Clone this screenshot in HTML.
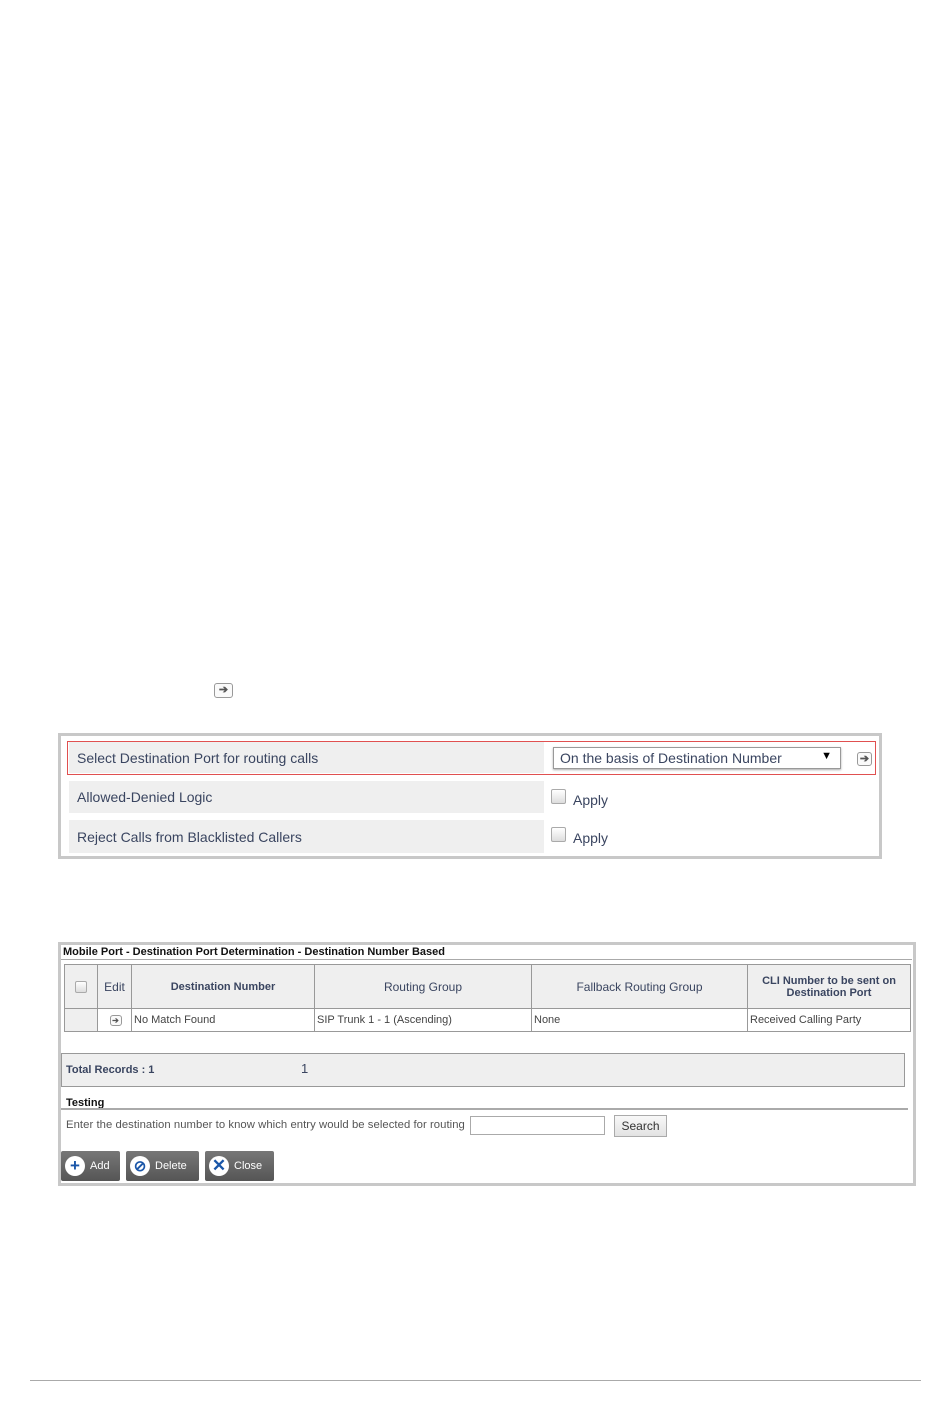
<!DOCTYPE html>
<html><head><meta charset="utf-8"><style>
*{margin:0;padding:0;box-sizing:border-box}
body{width:950px;height:1409px;background:#fff;position:relative;font-family:"Liberation Sans",Arial,sans-serif;overflow:hidden}
.a{position:absolute}
.lbl{background:#efefef;color:#3a4560;font-size:14px;padding-left:8px;display:flex;align-items:center}
.cb{width:15px;height:15px;border:1px solid #aaa;border-radius:2px;background:linear-gradient(#fff,#ddd)}
.ap{font-size:14px;color:#3a4560}
.ic{width:16px;height:14px;border:1px solid #999;border-radius:3px;font-size:11px;font-weight:bold;color:#555;text-align:center;line-height:12px;background:#fafafa}
table{border-collapse:collapse;font-size:11px}
td,th{border:1px solid #999}
th{background:#efefef;color:#3a4560;font-weight:bold;font-size:11px}
td{color:#444;padding-left:2px}
.btn{background:linear-gradient(#777,#555);color:#fff;font-size:11px;display:flex;align-items:center;border-radius:2px}
.circ{width:20px;height:20px;border-radius:50%;background:#fff;margin:0 5px 0 4px;display:flex;align-items:center;justify-content:center;color:#1a56a8;font-weight:bold;font-size:17px}
</style></head><body>
<div class="a ic" style="left:214px;top:683px;width:19px;height:15px">➔</div>

<div class="a" style="left:58px;top:733px;width:824px;height:126px;border:3px solid #c8c8c8"></div>
<div class="a" style="left:67px;top:741px;width:809px;height:34px;border:1px solid #e05050"></div>
<div class="a lbl" style="left:69px;top:742px;width:475px;height:31px">Select Destination Port for routing calls</div>
<div class="a" style="left:553px;top:747px;width:288px;height:22px;border:1px solid #999;box-shadow:0 1px 2px #aaa;font-size:14px;color:#3a4560;padding:2px 6px">On the basis of Destination Number<span style="position:absolute;right:8px;top:2px;font-size:11px;color:#000">▼</span></div>
<div class="a ic" style="left:857px;top:752px;width:15px;height:14px">➔</div>
<div class="a lbl" style="left:69px;top:781px;width:475px;height:32px">Allowed-Denied Logic</div>
<div class="a cb" style="left:551px;top:789px"></div><div class="a ap" style="left:573px;top:792px">Apply</div>
<div class="a lbl" style="left:69px;top:820px;width:475px;height:33px">Reject Calls from Blacklisted Callers</div>
<div class="a cb" style="left:551px;top:827px"></div><div class="a ap" style="left:573px;top:830px">Apply</div>

<div class="a" style="left:58px;top:942px;width:858px;height:244px;border:3px solid #c8c8c8"></div>
<div class="a" style="left:63px;top:946px;font-size:11px;font-weight:bold;color:#111">Mobile Port - Destination Port Determination - Destination Number Based</div>
<div class="a" style="left:61px;top:959px;width:851px;border-top:1px solid #aaa"></div>
<table class="a" style="left:64px;top:964px;width:847px">
<tr style="height:44px"><th style="width:33px"><div class="cb" style="margin:auto;width:12px;height:12px"></div></th><th style="width:34px;font-weight:normal;font-size:12px">Edit</th><th style="width:183px">Destination Number</th><th style="width:217px;font-weight:normal;font-size:12px">Routing Group</th><th style="width:216px;font-weight:normal;font-size:12px">Fallback Routing Group</th><th>CLI Number to be sent on<br>Destination Port</th></tr>
<tr style="height:23px"><td style="background:#efefef"></td><td><div class="ic" style="margin:auto;width:12px;height:11px;font-size:8px;line-height:9px">➔</div></td><td>No Match Found</td><td>SIP Trunk 1 - 1 (Ascending)</td><td>None</td><td>Received Calling Party</td></tr>
</table>
<div class="a" style="left:61px;top:1053px;width:844px;height:34px;background:#efefef;border:1px solid #999"></div>
<div class="a" style="left:66px;top:1064px;font-size:11px;font-weight:bold;color:#3a4560">Total Records : 1</div>
<div class="a" style="left:301px;top:1061px;font-size:13px;color:#3a4560">1</div>
<div class="a" style="left:66px;top:1097px;font-size:11px;font-weight:bold;color:#111">Testing</div>
<div class="a" style="left:61px;top:1108px;width:847px;border-top:2px solid #aaa"></div>
<div class="a" style="left:66px;top:1119px;font-size:11.3px;color:#555;letter-spacing:0.05px">Enter the destination number to know which entry would be selected for routing</div>
<div class="a" style="left:470px;top:1116px;width:135px;height:19px;border:1px solid #aaa"></div>
<div class="a" style="left:614px;top:1115px;width:53px;height:22px;border:1px solid #aaa;background:linear-gradient(#f8f8f8,#e2e2e2);font-size:12px;color:#333;text-align:center;line-height:20px">Search</div>
<div class="a btn" style="left:61px;top:1151px;width:59px;height:30px"><div class="circ">+</div>Add</div>
<div class="a btn" style="left:126px;top:1151px;width:73px;height:30px"><div class="circ" style="font-size:15px">⊘</div>Delete</div>
<div class="a btn" style="left:205px;top:1151px;width:69px;height:30px"><div class="circ">✕</div>Close</div>
<div class="a" style="left:30px;top:1380px;width:891px;border-top:1px solid #aaa"></div>
</body></html>
